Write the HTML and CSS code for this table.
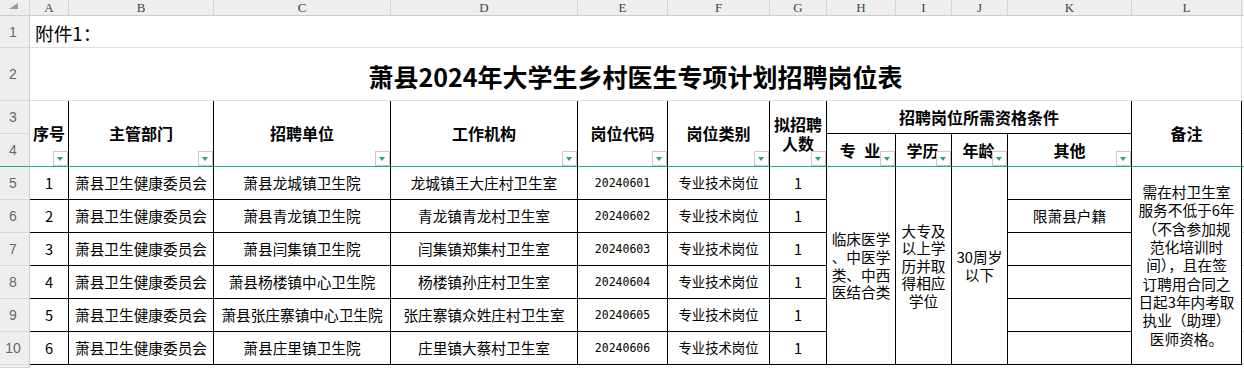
FILE: index.html
```html
<!DOCTYPE html>
<html lang="zh-CN">
<head>
<meta charset="utf-8">
<title>萧县2024年大学生乡村医生专项计划招聘岗位表</title>
<link rel="stylesheet" href="styles.css">
</head>
<body>
<div class="sheet">
  <!-- column header -->
  <div class="c ch corner"><svg width="9" height="6" viewBox="0 0 9 6"><polygon points="0,6 9,6 9,0" fill="#9a9a9a"/></svg></div>
  <div class="c ch">A</div>
  <div class="c ch">B</div>
  <div class="c ch">C</div>
  <div class="c ch">D</div>
  <div class="c ch">E</div>
  <div class="c ch">F</div>
  <div class="c ch">G</div>
  <div class="c ch">H</div>
  <div class="c ch">I</div>
  <div class="c ch">J</div>
  <div class="c ch">K</div>
  <div class="c ch">L</div>
  <div class="c ch nr"></div>

  <!-- row 1 -->
  <div class="c rh">1</div>
  <div class="c g s12 note">附件1：</div>
  <div class="c g nr"></div>

  <!-- row 2 -->
  <div class="c rh">2</div>
  <div class="c g s12 title">萧县2024年大学生乡村医生专项计划招聘岗位表</div>
  <div class="c g nr"></div>

  <!-- row 3 -->
  <div class="c rh">3</div>
  <div class="c r2 hd fz">序号<span class="fb"></span></div>
  <div class="c r2 hd fz">主管部门<span class="fb"></span></div>
  <div class="c r2 hd fz">招聘单位<span class="fb"></span></div>
  <div class="c r2 hd fz">工作机构<span class="fb"></span></div>
  <div class="c r2 hd fz">岗位代码<span class="fb"></span></div>
  <div class="c r2 hd fz">岗位类别<span class="fb"></span></div>
  <div class="c r2 hd fz stack"><span class="ln">拟招聘</span><span class="ln">人数</span><span class="fb"></span></div>
  <div class="c s4 hd">招聘岗位所需资格条件</div>
  <div class="c r2 hd fz">备注</div>
  <div class="c g nr"></div>

  <!-- row 4 -->
  <div class="c rh fz">4</div>
  <div class="c hd fz sub"><span class="ws">专 业</span><span class="fb"></span></div>
  <div class="c hd fz sub">学历<span class="fb"></span></div>
  <div class="c hd fz sub">年龄<span class="fb"></span></div>
  <div class="c hd fz">其他<span class="fb"></span></div>
  <div class="c g nr fz"></div>

  <!-- row 5 -->
  <div class="c rh">5</div>
  <div class="c">1</div>
  <div class="c">萧县卫生健康委员会</div>
  <div class="c">萧县龙城镇卫生院</div>
  <div class="c">龙城镇王大庄村卫生室</div>
  <div class="c code">20240601</div>
  <div class="c sm">专业技术岗位</div>
  <div class="c">1</div>
  <div class="c r6 stack wrap"><span class="ln">临床医学</span><span class="ln">、中医学</span><span class="ln">类、中西</span><span class="ln">医结合类</span></div>
  <div class="c r6 stack wrap"><span class="ln">大专及</span><span class="ln">以上学</span><span class="ln">历并取</span><span class="ln">得相应</span><span class="ln">学位</span></div>
  <div class="c r6 stack wrap"><span class="ln">30周岁</span><span class="ln">以下</span></div>
  <div class="c"></div>
  <div class="c r6 stack remark"><span class="ln">需在村卫生室</span><span class="ln">服务不低于6年</span><span class="ln">（不含参加规</span><span class="ln">范化培训时</span><span class="ln">间），且在签</span><span class="ln">订聘用合同之</span><span class="ln">日起3年内考取</span><span class="ln">执业（助理）</span><span class="ln">医师资格。</span></div>
  <div class="c g nr"></div>

  <!-- row 6 -->
  <div class="c rh">6</div>
  <div class="c">2</div>
  <div class="c">萧县卫生健康委员会</div>
  <div class="c">萧县青龙镇卫生院</div>
  <div class="c">青龙镇青龙村卫生室</div>
  <div class="c code">20240602</div>
  <div class="c sm">专业技术岗位</div>
  <div class="c">1</div>
  <div class="c">限萧县户籍</div>
  <div class="c g nr"></div>

  <!-- row 7 -->
  <div class="c rh">7</div>
  <div class="c">3</div>
  <div class="c">萧县卫生健康委员会</div>
  <div class="c">萧县闫集镇卫生院</div>
  <div class="c">闫集镇郑集村卫生室</div>
  <div class="c code">20240603</div>
  <div class="c sm">专业技术岗位</div>
  <div class="c">1</div>
  <div class="c"></div>
  <div class="c g nr"></div>

  <!-- row 8 -->
  <div class="c rh">8</div>
  <div class="c">4</div>
  <div class="c">萧县卫生健康委员会</div>
  <div class="c">萧县杨楼镇中心卫生院</div>
  <div class="c">杨楼镇孙庄村卫生室</div>
  <div class="c code">20240604</div>
  <div class="c sm">专业技术岗位</div>
  <div class="c">1</div>
  <div class="c"></div>
  <div class="c g nr"></div>

  <!-- row 9 -->
  <div class="c rh">9</div>
  <div class="c">5</div>
  <div class="c">萧县卫生健康委员会</div>
  <div class="c">萧县张庄寨镇中心卫生院</div>
  <div class="c">张庄寨镇众姓庄村卫生室</div>
  <div class="c code">20240605</div>
  <div class="c sm">专业技术岗位</div>
  <div class="c">1</div>
  <div class="c"></div>
  <div class="c g nr"></div>

  <!-- row 10 -->
  <div class="c rh">10</div>
  <div class="c">6</div>
  <div class="c">萧县卫生健康委员会</div>
  <div class="c">萧县庄里镇卫生院</div>
  <div class="c">庄里镇大蔡村卫生室</div>
  <div class="c code">20240606</div>
  <div class="c sm">专业技术岗位</div>
  <div class="c">1</div>
  <div class="c"></div>
  <div class="c g nr"></div>

  <!-- row 11 (partially visible) -->
  <div class="c rh"></div>
  <div class="c blank s13"></div>
</div>
</body>
</html>
```

FILE: styles.css
```css
html, body {
  margin: 0;
  padding: 0;
  background: #fff;
  overflow: hidden;
}

.sheet {
  display: grid;
  grid-template-columns: 30px 39px 145px 177px 187px 90px 102px 57px 69px 56px 56px 124px 110px 1fr;
  grid-template-rows: 16px 32px 53px 33px 33px repeat(6, 33px) 1fr;
  width: 1244px;
  height: 368px;
  font-family: "Noto Sans CJK SC", "Noto Sans", sans-serif;
  color: #000;
}

.c {
  box-sizing: border-box;
  border-right: 1px solid #000;
  border-bottom: 1px solid #000;
  display: flex;
  align-items: center;
  justify-content: center;
  text-align: center;
  position: relative;
  font-size: 14.67px;
  line-height: 18px;
  white-space: nowrap;
  min-width: 0;
}

/* column header */
.ch {
  background: #eeeeee;
  border-right-color: #d5d5d5;
  border-bottom-color: #cdcdcd;
  font-family: "Liberation Serif", "DejaVu Serif", serif;
  font-size: 13px;
  line-height: 15px;
  color: #444;
}

.corner {
  align-items: flex-start;
  justify-content: flex-start;
  padding: 3px 0 0 9px;
}

.corner svg {
  display: block;
}

/* row header */
.rh {
  background: #eeeeee;
  border-right-color: #cdcdcd;
  border-bottom-color: #d9d9d9;
  font-family: "Liberation Sans", "DejaVu Sans", sans-serif;
  font-size: 14px;
  color: #666;
  padding-right: 3px;
}

/* plain gridline cells */
.g {
  border-right-color: #e0e0e0;
  border-bottom-color: #e0e0e0;
}

.nr {
  border-right: 0;
}

.blank {
  border: 0;
}

/* frozen-pane line */
.fz {
  border-bottom-color: #22b07a;
}

/* spans */
.s12 { grid-column: span 12; }
.s13 { grid-column: span 13; }
.s4 { grid-column: span 4; }
.r2 { grid-row: span 2; }
.r6 { grid-row: span 6; }

.note {
  justify-content: flex-start;
  align-items: flex-end;
  padding: 0 0 4px 5px;
  font-size: 18.67px;
  line-height: 20px;
}

.title {
  font-size: 25px;
  font-weight: 700;
  line-height: 28px;
  padding-top: 3px;
}

.hd {
  font-weight: 700;
  font-size: 16px;
  line-height: 19px;
}

.sub {
  padding-right: 2px;
}

.ws {
  word-spacing: 5px;
}

/* multi-line cells: one block per line */
.stack {
  flex-direction: column;
}

.ln {
  display: block;
  height: 19px;
  line-height: 19px;
}

.wrap .ln {
  height: 17.6px;
  line-height: 17.6px;
}

.remark .ln {
  height: 18.4px;
  line-height: 18.4px;
}

.sm {
  font-size: 13.33px;
}

.code {
  font-family: "DejaVu Sans Mono", "Liberation Mono", monospace;
  font-size: 11.5px;
}

/* filter dropdown button */
.fb {
  position: absolute;
  right: 0;
  bottom: 0;
  width: 15px;
  height: 15px;
  box-sizing: border-box;
  border: 1px solid #c9c9c9;
  background: #fff;
}

.fb::after {
  content: "";
  position: absolute;
  left: 3px;
  top: 5px;
  border-left: 3px solid transparent;
  border-right: 3px solid transparent;
  border-top: 4px solid #1fa870;
}
```
